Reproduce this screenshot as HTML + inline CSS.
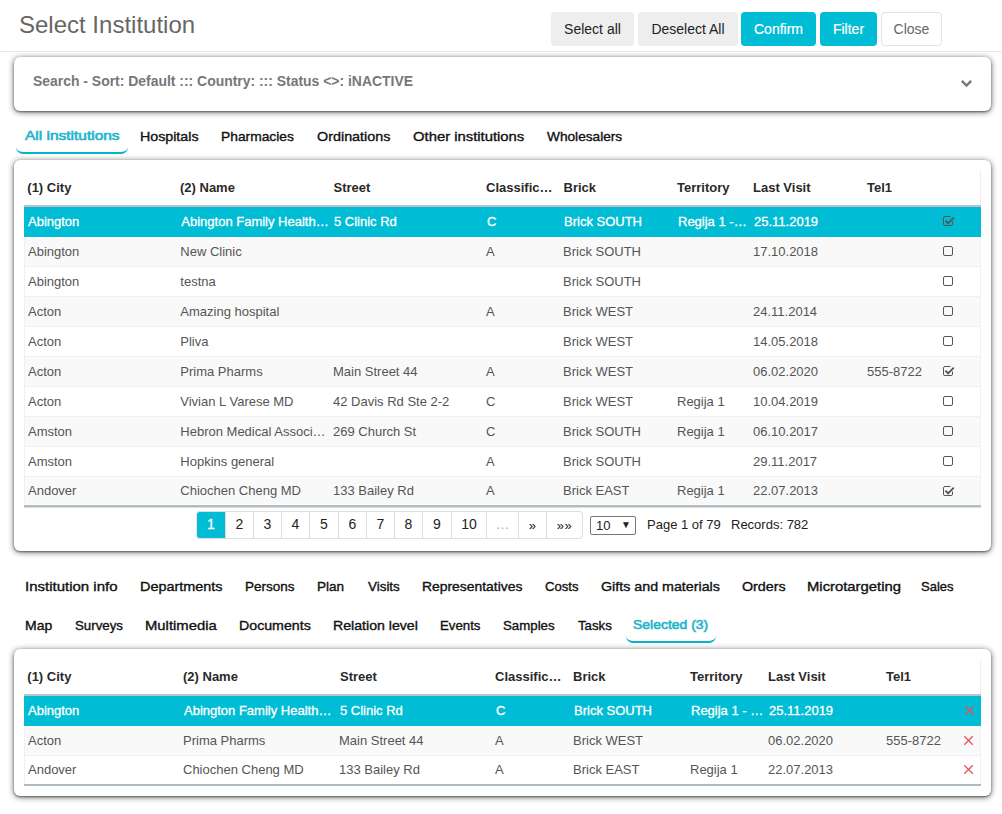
<!DOCTYPE html><html><head><meta charset="utf-8"><title>Select Institution</title><style>
*{box-sizing:border-box;margin:0;padding:0}
html,body{width:1002px;height:814px;overflow:hidden;background:#fff}
body{position:relative;font-family:"Liberation Sans",sans-serif;font-size:13px;color:#555}
.a{position:absolute;white-space:nowrap}
.title{left:19px;top:10px;font-size:24px;line-height:30px;color:#666}
.hline{left:0;top:51px;width:1002px;height:1px;background:#e6e9eb}
.btn{top:12px;height:34px;border-radius:4px;font-size:14px;line-height:34px;text-align:center}
.bg{background:#eeeeee;color:#222}
.bc{background:#00bcd4;color:#fff;-webkit-text-stroke:0.2px #fff}
.bw{background:#fff;color:#666;border:1px solid #e3e3e3;line-height:32px}
.panel{background:#fff;border-radius:6px;box-shadow:0 1px 2px rgba(0,0,0,.4),0 1px 6px rgba(0,0,0,.6)}
.search{left:33px;top:73px;font-size:14px;font-weight:bold;color:#777;line-height:16px;transform:scaleX(0.995);transform-origin:0 0}
.tab{font-size:13px;color:#111;line-height:16px;-webkit-text-stroke:0.35px #111}
.tab.act{color:#1eb4cb;-webkit-text-stroke:0.6px #1eb4cb}
.uline{height:8px;border-bottom:2px solid #06b4cc;border-radius:0 0 7px 7px}
.row{left:24px;width:957px;height:30px;line-height:30px}
.row span{position:absolute;top:0;white-space:nowrap}
.odd{background:#fff}
.even{background:#f9f9f9}
.sel{background:#00bcd4;color:#fff;-webkit-text-stroke:0.3px #fff}
.hdr span{color:#2a2a2a;font-weight:bold}
.pg{top:511px;height:28px;line-height:25px;font-size:14px;color:#222;text-align:center;border:1px solid #ddd;border-left:none;background:#fff}
</style></head><body>
<div class="a title">Select Institution</div>
<div class="a hline"></div>
<div class="a btn bg" style="left:551px;width:83px">Select all</div>
<div class="a btn bg" style="left:638px;width:100px">Deselect All</div>
<div class="a btn bc" style="left:741px;width:75px">Confirm</div>
<div class="a btn bc" style="left:820px;width:57px">Filter</div>
<div class="a btn bw" style="left:881px;width:61px">Close</div>
<div class="a panel" style="left:14px;top:57px;width:977px;height:54px"></div>
<div class="a search">Search - Sort: Default ::: Country: ::: Status &lt;&gt;: iNACTIVE</div>
<svg class="a" style="left:958px;top:76px" width="18" height="14" viewBox="0 0 18 14"><path d="M3.8 4.8 L8.5 9.5 L13.2 4.8" fill="none" stroke="#777" stroke-width="2.4"/></svg>
<div class="a tab act" style="left:24.86px;top:128px;transform:scaleX(1.1900);transform-origin:0 0">All institutions</div>
<div class="a tab" style="left:139.91px;top:129px;transform:scaleX(1.0943);transform-origin:0 0">Hospitals</div>
<div class="a tab" style="left:220.97px;top:129px;transform:scaleX(1.0618);transform-origin:0 0">Pharmacies</div>
<div class="a tab" style="left:317.00px;top:129px;transform:scaleX(1.1045);transform-origin:0 0">Ordinations</div>
<div class="a tab" style="left:413.34px;top:129px;transform:scaleX(1.1402);transform-origin:0 0">Other institutions</div>
<div class="a tab" style="left:547.00px;top:129px;transform:scaleX(1.0514);transform-origin:0 0">Wholesalers</div>
<div class="a uline" style="left:16px;top:146px;width:112px"></div>
<div class="a panel" style="left:14px;top:160px;width:977px;height:391px"></div>
<div class="a" style="left:980px;top:171px;width:1px;height:34px;background:#eee"></div>
<div class="a row hdr" style="top:172.5px;height:30px;line-height:30px"><span style="left:3.3000000000000007px">(1) City</span><span style="left:156px">(2) Name</span><span style="left:309.5px">Street</span><span style="left:462px">Classific…</span><span style="left:539.5px">Brick</span><span style="left:653px">Territory</span><span style="left:729px">Last Visit</span><span style="left:843px">Tel1</span></div>
<div class="a" style="left:24px;top:205px;width:957px;height:2px;background:#bcc2c8"></div>
<div class="a row sel" style="top:207px;height:30px;line-height:30px"><span style="left:4px">Abington</span><span style="left:157.3px">Abington Family Health…</span><span style="left:310px">5 Clinic Rd</span><span style="left:463px">C</span><span style="left:540px">Brick SOUTH</span><span style="left:654px">Regija 1 -…</span><span style="left:730px">25.11.2019</span><svg style="position:absolute;left:918px;top:8px" width="14" height="13" viewBox="0 0 14 13"><path d="M8.5 1.5 H3 Q1.5 1.5 1.5 3 V9 Q1.5 10.5 3 10.5 H9 Q10.5 10.5 10.5 9 V6.5" fill="none" stroke="#555" stroke-width="1"/><path d="M3.4 5.6 L6.1 8.4 L11.8 2.6" fill="none" stroke="#555" stroke-width="1.9"/></svg></div>
<div class="a row even" style="top:237px;height:30px;line-height:30px"><span style="left:4px">Abington</span><span style="left:156.3px">New Clinic</span><span style="left:462px">A</span><span style="left:539px">Brick SOUTH</span><span style="left:729px">17.10.2018</span><svg style="position:absolute;left:918px;top:8px" width="14" height="13" viewBox="0 0 14 13"><rect x="1.5" y="1.5" width="9" height="9" rx="1.5" fill="none" stroke="#555" stroke-width="1"/></svg></div>
<div class="a" style="left:24px;top:266px;width:957px;height:1px;background:#f0f0f0"></div>
<div class="a row odd" style="top:267px;height:30px;line-height:30px"><span style="left:4px">Abington</span><span style="left:156.3px">testna</span><span style="left:539px">Brick SOUTH</span><svg style="position:absolute;left:918px;top:8px" width="14" height="13" viewBox="0 0 14 13"><rect x="1.5" y="1.5" width="9" height="9" rx="1.5" fill="none" stroke="#555" stroke-width="1"/></svg></div>
<div class="a" style="left:24px;top:296px;width:957px;height:1px;background:#f0f0f0"></div>
<div class="a row even" style="top:297px;height:30px;line-height:30px"><span style="left:4px">Acton</span><span style="left:156.3px">Amazing hospital</span><span style="left:462px">A</span><span style="left:539px">Brick WEST</span><span style="left:729px">24.11.2014</span><svg style="position:absolute;left:918px;top:8px" width="14" height="13" viewBox="0 0 14 13"><rect x="1.5" y="1.5" width="9" height="9" rx="1.5" fill="none" stroke="#555" stroke-width="1"/></svg></div>
<div class="a" style="left:24px;top:326px;width:957px;height:1px;background:#f0f0f0"></div>
<div class="a row odd" style="top:327px;height:30px;line-height:30px"><span style="left:4px">Acton</span><span style="left:156.3px">Pliva</span><span style="left:539px">Brick WEST</span><span style="left:729px">14.05.2018</span><svg style="position:absolute;left:918px;top:8px" width="14" height="13" viewBox="0 0 14 13"><rect x="1.5" y="1.5" width="9" height="9" rx="1.5" fill="none" stroke="#555" stroke-width="1"/></svg></div>
<div class="a" style="left:24px;top:356px;width:957px;height:1px;background:#f0f0f0"></div>
<div class="a row even" style="top:357px;height:30px;line-height:30px"><span style="left:4px">Acton</span><span style="left:156.3px">Prima Pharms</span><span style="left:309px">Main Street 44</span><span style="left:462px">A</span><span style="left:539px">Brick WEST</span><span style="left:729px">06.02.2020</span><span style="left:843px">555-8722</span><svg style="position:absolute;left:918px;top:8px" width="14" height="13" viewBox="0 0 14 13"><path d="M8.5 1.5 H3 Q1.5 1.5 1.5 3 V9 Q1.5 10.5 3 10.5 H9 Q10.5 10.5 10.5 9 V6.5" fill="none" stroke="#555" stroke-width="1"/><path d="M3.4 5.6 L6.1 8.4 L11.8 2.6" fill="none" stroke="#555" stroke-width="1.9"/></svg></div>
<div class="a" style="left:24px;top:386px;width:957px;height:1px;background:#f0f0f0"></div>
<div class="a row odd" style="top:387px;height:30px;line-height:30px"><span style="left:4px">Acton</span><span style="left:156.3px">Vivian L Varese MD</span><span style="left:309px">42 Davis Rd Ste 2-2</span><span style="left:462px">C</span><span style="left:539px">Brick WEST</span><span style="left:653px">Regija 1</span><span style="left:729px">10.04.2019</span><svg style="position:absolute;left:918px;top:8px" width="14" height="13" viewBox="0 0 14 13"><rect x="1.5" y="1.5" width="9" height="9" rx="1.5" fill="none" stroke="#555" stroke-width="1"/></svg></div>
<div class="a" style="left:24px;top:416px;width:957px;height:1px;background:#f0f0f0"></div>
<div class="a row even" style="top:417px;height:30px;line-height:30px"><span style="left:4px">Amston</span><span style="left:156.3px">Hebron Medical Associ…</span><span style="left:309px">269 Church St</span><span style="left:462px">C</span><span style="left:539px">Brick SOUTH</span><span style="left:653px">Regija 1</span><span style="left:729px">06.10.2017</span><svg style="position:absolute;left:918px;top:8px" width="14" height="13" viewBox="0 0 14 13"><rect x="1.5" y="1.5" width="9" height="9" rx="1.5" fill="none" stroke="#555" stroke-width="1"/></svg></div>
<div class="a" style="left:24px;top:446px;width:957px;height:1px;background:#f0f0f0"></div>
<div class="a row odd" style="top:447px;height:30px;line-height:30px"><span style="left:4px">Amston</span><span style="left:156.3px">Hopkins general</span><span style="left:462px">A</span><span style="left:539px">Brick SOUTH</span><span style="left:729px">29.11.2017</span><svg style="position:absolute;left:918px;top:8px" width="14" height="13" viewBox="0 0 14 13"><rect x="1.5" y="1.5" width="9" height="9" rx="1.5" fill="none" stroke="#555" stroke-width="1"/></svg></div>
<div class="a" style="left:24px;top:476px;width:957px;height:1px;background:#f0f0f0"></div>
<div class="a row even" style="top:477px;height:30px;line-height:28px"><span style="left:4px">Andover</span><span style="left:156.3px">Chiochen Cheng MD</span><span style="left:309px">133 Bailey Rd</span><span style="left:462px">A</span><span style="left:539px">Brick EAST</span><span style="left:653px">Regija 1</span><span style="left:729px">22.07.2013</span><svg style="position:absolute;left:918px;top:8px" width="14" height="13" viewBox="0 0 14 13"><path d="M8.5 1.5 H3 Q1.5 1.5 1.5 3 V9 Q1.5 10.5 3 10.5 H9 Q10.5 10.5 10.5 9 V6.5" fill="none" stroke="#555" stroke-width="1"/><path d="M3.4 5.6 L6.1 8.4 L11.8 2.6" fill="none" stroke="#555" stroke-width="1.9"/></svg></div>
<div class="a" style="left:24px;top:237px;width:957px;height:1px;background:#fff"></div>
<div class="a" style="left:24px;top:504px;width:957px;height:1px;background:#fdfdfd"></div>
<div class="a" style="left:24px;top:237px;width:1px;height:268px;background:#f0f0f0"></div>
<div class="a" style="left:980px;top:237px;width:1px;height:268px;background:#f0f0f0"></div>
<div class="a" style="left:24px;top:505px;width:957px;height:2px;background:#b0bcc4"></div>
<div class="a" style="left:24px;top:507px;width:957px;height:1px;background:#dcdcdc"></div>
<div class="a pg" style="left:196px;width:30px;background:#00bcd4;color:#fff;border-left:1px solid #e6e6e6;border-radius:4px 0 0 4px;-webkit-text-stroke:0.3px #fff;">1</div>
<div class="a pg" style="left:226px;width:28px;">2</div>
<div class="a pg" style="left:254px;width:28px;">3</div>
<div class="a pg" style="left:282px;width:28px;">4</div>
<div class="a pg" style="left:310px;width:29px;">5</div>
<div class="a pg" style="left:339px;width:28px;">6</div>
<div class="a pg" style="left:367px;width:28px;">7</div>
<div class="a pg" style="left:395px;width:28px;">8</div>
<div class="a pg" style="left:423px;width:29px;">9</div>
<div class="a pg" style="left:452px;width:35px;">10</div>
<div class="a pg" style="left:487px;width:32px;color:#aaa;">…</div>
<div class="a pg" style="left:519px;width:28px;padding-top:1px;font-size:13px;letter-spacing:0.5px;">»</div>
<div class="a pg" style="left:547px;width:36px;border-radius:0 4px 4px 0;padding-top:1px;font-size:13px;letter-spacing:0.5px;">»»</div>
<div class="a" style="left:590px;top:516px;width:46px;height:19px;border:1px solid #777;border-radius:2px;background:#fff;font-size:13px;line-height:17px;color:#222;padding-left:5px">10<span style="position:absolute;left:30px;top:-1px;font-size:10px">&#9660;</span></div>
<div class="a" style="left:647px;top:516px;font-size:13px;line-height:17px;color:#222">Page 1 of 79</div>
<div class="a" style="left:731px;top:516px;font-size:13px;line-height:17px;color:#222">Records: 782</div>
<div class="a tab" style="left:24.92px;top:579px;transform:scaleX(1.1538);transform-origin:0 0">Institution info</div>
<div class="a tab" style="left:140.30px;top:579px;transform:scaleX(1.1081);transform-origin:0 0">Departments</div>
<div class="a tab" style="left:244.96px;top:579px;transform:scaleX(1.0383);transform-origin:0 0">Persons</div>
<div class="a tab" style="left:316.96px;top:579px;transform:scaleX(1.0400);transform-origin:0 0">Plan</div>
<div class="a tab" style="left:367.62px;top:579px;transform:scaleX(1.0312);transform-origin:0 0">Visits</div>
<div class="a tab" style="left:421.97px;top:579px;transform:scaleX(1.0691);transform-origin:0 0">Representatives</div>
<div class="a tab" style="left:545.38px;top:579px;transform:scaleX(1.0091);transform-origin:0 0">Costs</div>
<div class="a tab" style="left:600.95px;top:579px;transform:scaleX(1.0972);transform-origin:0 0">Gifts and materials</div>
<div class="a tab" style="left:741.95px;top:579px;transform:scaleX(1.0974);transform-origin:0 0">Orders</div>
<div class="a tab" style="left:806.86px;top:579px;transform:scaleX(1.1407);transform-origin:0 0">Microtargeting</div>
<div class="a tab" style="left:921.38px;top:579px;transform:scaleX(1.0031);transform-origin:0 0">Sales</div>
<div class="a tab" style="left:24.96px;top:618px;transform:scaleX(1.0760);transform-origin:0 0">Map</div>
<div class="a tab" style="left:75.00px;top:618px;transform:scaleX(1.0213);transform-origin:0 0">Surveys</div>
<div class="a tab" style="left:144.86px;top:618px;transform:scaleX(1.1419);transform-origin:0 0">Multimedia</div>
<div class="a tab" style="left:238.95px;top:618px;transform:scaleX(1.0908);transform-origin:0 0">Documents</div>
<div class="a tab" style="left:332.54px;top:618px;transform:scaleX(1.0870);transform-origin:0 0">Relation level</div>
<div class="a tab" style="left:439.59px;top:618px;transform:scaleX(1.0175);transform-origin:0 0">Events</div>
<div class="a tab" style="left:503.00px;top:618px;transform:scaleX(1.0196);transform-origin:0 0">Samples</div>
<div class="a tab" style="left:578.20px;top:618px;transform:scaleX(1.0176);transform-origin:0 0">Tasks</div>
<div class="a tab act" style="left:632.93px;top:617px;transform:scaleX(1.0725);transform-origin:0 0">Selected (3)</div>
<div class="a uline" style="left:626px;top:635px;width:90px"></div>
<div class="a panel" style="left:14px;top:649px;width:977px;height:147px"></div>
<div class="a" style="left:980px;top:660px;width:1px;height:34px;background:#eee"></div>
<div class="a row hdr" style="top:661.5px;height:30px;line-height:30px"><span style="left:3.3000000000000007px">(1) City</span><span style="left:159px">(2) Name</span><span style="left:316px">Street</span><span style="left:471px">Classific…</span><span style="left:549px">Brick</span><span style="left:666px">Territory</span><span style="left:744px">Last Visit</span><span style="left:862px">Tel1</span></div>
<div class="a" style="left:24px;top:694px;width:957px;height:2px;background:#bcc2c8"></div>
<div class="a row sel" style="top:696px;height:30px;line-height:30px"><span style="left:4px">Abington</span><span style="left:160px">Abington Family Health…</span><span style="left:316px">5 Clinic Rd</span><span style="left:472px">C</span><span style="left:550px">Brick SOUTH</span><span style="left:667px">Regija 1 - …</span><span style="left:745px">25.11.2019</span><svg style="position:absolute;left:940px;top:9px" width="12" height="12" viewBox="0 0 12 12"><path d="M1.3 1.3 L9.8 9.8 M9.8 1.3 L1.3 9.8" stroke="#ee4b5b" stroke-width="1.25"/></svg></div>
<div class="a row even" style="top:726px;height:29px;line-height:29px"><span style="left:4px">Acton</span><span style="left:159px">Prima Pharms</span><span style="left:315px">Main Street 44</span><span style="left:471px">A</span><span style="left:549px">Brick WEST</span><span style="left:744px">06.02.2020</span><span style="left:862px">555-8722</span><svg style="position:absolute;left:939px;top:9px" width="12" height="12" viewBox="0 0 12 12"><path d="M1.3 1.3 L9.8 9.8 M9.8 1.3 L1.3 9.8" stroke="#ee4b5b" stroke-width="1.25"/></svg></div>
<div class="a row odd" style="top:755px;height:29px;line-height:29px"><span style="left:4px">Andover</span><span style="left:159px">Chiochen Cheng MD</span><span style="left:315px">133 Bailey Rd</span><span style="left:471px">A</span><span style="left:549px">Brick EAST</span><span style="left:666px">Regija 1</span><span style="left:744px">22.07.2013</span><svg style="position:absolute;left:939px;top:9px" width="12" height="12" viewBox="0 0 12 12"><path d="M1.3 1.3 L9.8 9.8 M9.8 1.3 L1.3 9.8" stroke="#ee4b5b" stroke-width="1.25"/></svg></div>
<div class="a" style="left:24px;top:726px;width:957px;height:1px;background:#fff"></div>
<div class="a" style="left:24px;top:755px;width:957px;height:1px;background:#f0f0f0"></div>
<div class="a" style="left:24px;top:726px;width:1px;height:58px;background:#f0f0f0"></div>
<div class="a" style="left:980px;top:726px;width:1px;height:58px;background:#f0f0f0"></div>
<div class="a" style="left:24px;top:784px;width:957px;height:2px;background:#b0bcc4"></div>
</body></html>
